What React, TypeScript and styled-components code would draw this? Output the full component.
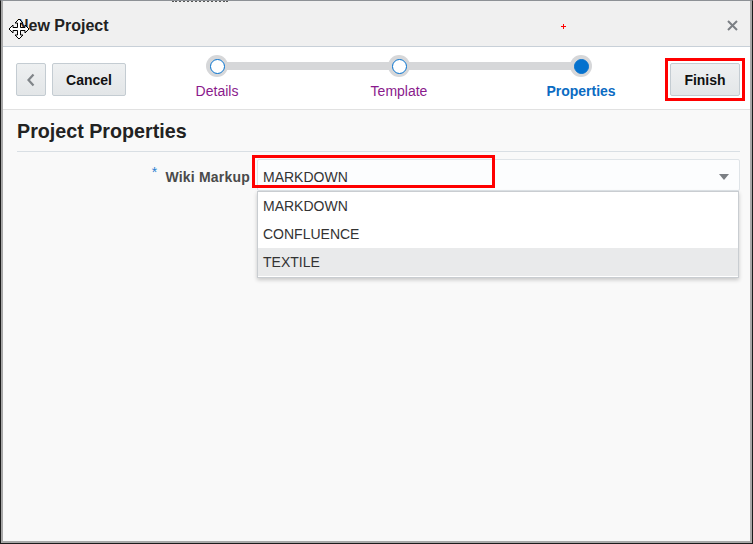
import React from "react";
import styled, { createGlobalStyle } from "styled-components";

const Global = createGlobalStyle`
  html, body { margin: 0; padding: 0; background: #ffffff; }
  body { font-family: "Liberation Sans", Arial, sans-serif; }
  * { box-sizing: border-box; }
  svg { display: block; }
`;

const Frame = styled.div`
  position: relative;
  width: 753px;
  height: 544px;
  border-top: 1px solid #8d9196;
  border-left: 1px solid #1c1c1c;
  border-right: 1px solid #1c1c1c;
  border-bottom: 1px solid #1c1c1c;
  overflow: hidden;
`;

const Dialog = styled.div`
  display: flex;
  flex-direction: column;
  height: 100%;
  border-left: 2px solid #a8a8a8;
  border-right: 2px solid #a8a8a8;
  border-bottom: 2px solid #a8a8a8;
  background: #f9f9f9;
`;

const Header = styled.div`
  display: flex;
  align-items: center;
  justify-content: space-between;
  height: 46px;
  padding: 4px 8px 0 14px;
  background: #f0f0f0;
  border-bottom: 1px solid #c8d0d8;
`;

const Title = styled.h1`
  margin: 0;
  font-size: 16px;
  font-weight: bold;
  color: #222;
`;

const CloseButton = styled.button`
  display: flex;
  align-items: center;
  justify-content: center;
  width: 20px;
  height: 20px;
  padding: 0;
  border: none;
  background: transparent;
`;

const Toolbar = styled.div`
  display: flex;
  align-items: flex-start;
  height: 63px;
  padding: 16px 10px 0 13px;
  background: #ffffff;
  border-bottom: 1px solid #e1e1e1;
`;

const Btn = styled.button<{ $w: number }>`
  flex: none;
  display: flex;
  align-items: center;
  justify-content: center;
  width: ${(p) => p.$w}px;
  height: 33px;
  padding: 0;
  font-family: "Liberation Sans", Arial, sans-serif;
  font-size: 14px;
  font-weight: bold;
  color: #111;
  background: linear-gradient(#eef0f1, #e3e6e8);
  border: 1px solid #c4ccd2;
  border-radius: 2px;
`;

const Gap = styled.div<{ $w: number }>`
  width: ${(p) => p.$w}px;
  flex: none;
`;

const Train = styled.div`
  flex: none;
  display: grid;
  grid-template-columns: repeat(3, 182px);
  margin-top: -8px;
  margin-right: -10px;
`;

const Stop = styled.div<{ $first?: boolean; $last?: boolean }>`
  position: relative;
  display: flex;
  flex-direction: column;
  align-items: center;
  &::before, &::after {
    content: "";
    position: absolute;
    top: 7px;
    height: 8px;
    background: #d6d7d9;
  }
  &::before {
    left: 0;
    width: 50%;
    display: ${(p) => (p.$first ? "none" : "block")};
  }
  &::after {
    right: 0;
    width: 50%;
    display: ${(p) => (p.$last ? "none" : "block")};
  }
`;

const Ring = styled.div`
  position: relative;
  z-index: 1;
  display: flex;
  align-items: center;
  justify-content: center;
  width: 22px;
  height: 22px;
  border-radius: 50%;
  background: #d6d7d9;
`;

const Dot = styled.div<{ $current?: boolean }>`
  width: 15px;
  height: 15px;
  border-radius: 50%;
  background: ${(p) => (p.$current ? "#0572ce" : "#ffffff")};
  border: 1.5px solid #0572ce;
`;

const StopLabel = styled.div<{ $current?: boolean }>`
  margin-top: 6px;
  font-size: 14px;
  font-weight: ${(p) => (p.$current ? "bold" : "normal")};
  color: ${(p) => (p.$current ? "#0b6bc2" : "#8a1a8c")};
`;

const Spacer = styled.div`
  flex: 1;
`;

const Highlighted = styled.div`
  flex: none;
  outline: 3px solid #ff0000;
  outline-offset: 2px;
`;

const Content = styled.div`
  flex: 1;
  padding: 10px 10px 0 13px;
  background: #f9f9f9;
`;

const SectionTitle = styled.h2`
  margin: 0 0 0 1px;
  padding-bottom: 8px;
  font-size: 19.7px;
  font-weight: bold;
  color: #222;
  border-bottom: 1px solid #d9dfe4;
  line-height: 23px;
`;

const FormRow = styled.div`
  display: grid;
  grid-template-columns: 241px 1fr;
  margin-top: 7px;
`;

const Label = styled.label`
  display: flex;
  justify-content: flex-end;
  align-items: center;
  padding: 3px 7px 0 0;
  height: 32px;
  font-size: 14px;
  font-weight: bold;
  color: #4a4a4a;
  letter-spacing: 0.2px;
`;

const Required = styled.span`
  color: #2a7fd0;
  font-weight: normal;
  font-size: 14px;
  margin-right: 8px;
  position: relative;
  top: -5px;
`;

const SelectWrap = styled.div`
  position: relative;
`;

const SelectBox = styled.div`
  display: flex;
  align-items: center;
  justify-content: space-between;
  height: 32px;
  padding: 3px 10px 0 5px;
  background: #fcfdfe;
  border: 1px solid #dfe4e8;
  border-radius: 2px;
  font-size: 14px;
  color: #333;
`;

const RedBox = styled.div`
  position: absolute;
  left: -5px;
  top: -4px;
  width: 243px;
  height: 33px;
  border: 3px solid #ff0000;
  pointer-events: none;
`;

const Menu = styled.ul`
  position: absolute;
  left: 0;
  right: 1px;
  top: 32px;
  margin: 0;
  padding: 0 0 1px 0;
  list-style: none;
  background: #ffffff;
  border: 1px solid #c9cdd1;
  box-shadow: 0 2px 4px rgba(0, 0, 0, 0.2);
`;

const Item = styled.li<{ $active?: boolean }>`
  display: flex;
  align-items: center;
  height: 28px;
  padding-left: 5px;
  font-size: 14px;
  color: #333;
  background: ${(p) => (p.$active ? "#e9eaeb" : "#ffffff")};
`;

const Cursor = styled.div`
  position: absolute;
  left: 7px;
  top: 17px;
  width: 22px;
  height: 22px;
  z-index: 5;
`;

const RedPlus = styled.div`
  position: absolute;
  left: 560px;
  top: 23px;
  width: 5px;
  height: 5px;
  z-index: 5;
`;

const TopBits = styled.div`
  position: absolute;
  left: 171px;
  top: -1px;
  width: 56px;
  height: 2px;
  border-top: 2px dotted #555;
  z-index: 5;
`;

const stops = [
  { label: "Details" },
  { label: "Template" },
  { label: "Properties", current: true },
];

export default function App() {
  return (
    <>
      <Global />
      <Frame>
        <TopBits />
        <Cursor>
          <svg width="22" height="22" viewBox="0 0 22 22">
            <path
              d="M11 1 L15 5 L12.5 5 L12.5 9.5 L17 9.5 L17 7 L21 11 L17 15 L17 12.5 L12.5 12.5 L12.5 17 L15 17 L11 21 L7 17 L9.5 17 L9.5 12.5 L5 12.5 L5 15 L1 11 L5 7 L5 9.5 L9.5 9.5 L9.5 5 L7 5 Z"
              fill="#fff"
              stroke="#000"
              strokeWidth="1"
              strokeLinejoin="miter"
            />
          </svg>
        </Cursor>
        <RedPlus>
          <svg width="5" height="5" viewBox="0 0 5 5">
            <rect x="2" y="0" width="1" height="5" fill="#ff0000" />
            <rect x="0" y="2" width="5" height="1" fill="#ff0000" />
          </svg>
        </RedPlus>
        <Dialog>
          <Header>
            <Title>New Project</Title>
            <CloseButton aria-label="Close">
              <svg width="11" height="11" viewBox="0 0 11 11">
                <path d="M1 1 L10 10 M10 1 L1 10" stroke="#7b7f84" strokeWidth="2" />
              </svg>
            </CloseButton>
          </Header>
          <Toolbar>
            <Btn $w={30} aria-label="Back">
              <svg width="10" height="14" viewBox="0 0 10 14">
                <path d="M7.5 1.5 L2.5 7 L7.5 12.5" fill="none" stroke="#808589" strokeWidth="2.2" />
              </svg>
            </Btn>
            <Gap $w={6} />
            <Btn $w={74}>Cancel</Btn>
            <Train>
              {stops.map((s, i) => (
                <Stop key={s.label} $first={i === 0} $last={i === stops.length - 1}>
                  <Ring>
                    <Dot $current={s.current} />
                  </Ring>
                  <StopLabel $current={s.current}>{s.label}</StopLabel>
                </Stop>
              ))}
            </Train>
            <Spacer />
            <Highlighted>
              <Btn $w={70}>Finish</Btn>
            </Highlighted>
          </Toolbar>
          <Content>
            <SectionTitle>Project Properties</SectionTitle>
            <FormRow>
              <Label>
                <Required>*</Required>Wiki Markup
              </Label>
              <SelectWrap>
                <SelectBox>
                  <span>MARKDOWN</span>
                  <svg width="10" height="6" viewBox="0 0 10 6">
                    <path d="M0 0 L10 0 L5 6 Z" fill="#7b7f84" />
                  </svg>
                </SelectBox>
                <RedBox />
                <Menu>
                  <Item>MARKDOWN</Item>
                  <Item>CONFLUENCE</Item>
                  <Item $active>TEXTILE</Item>
                </Menu>
              </SelectWrap>
            </FormRow>
          </Content>
        </Dialog>
      </Frame>
    </>
  );
}
